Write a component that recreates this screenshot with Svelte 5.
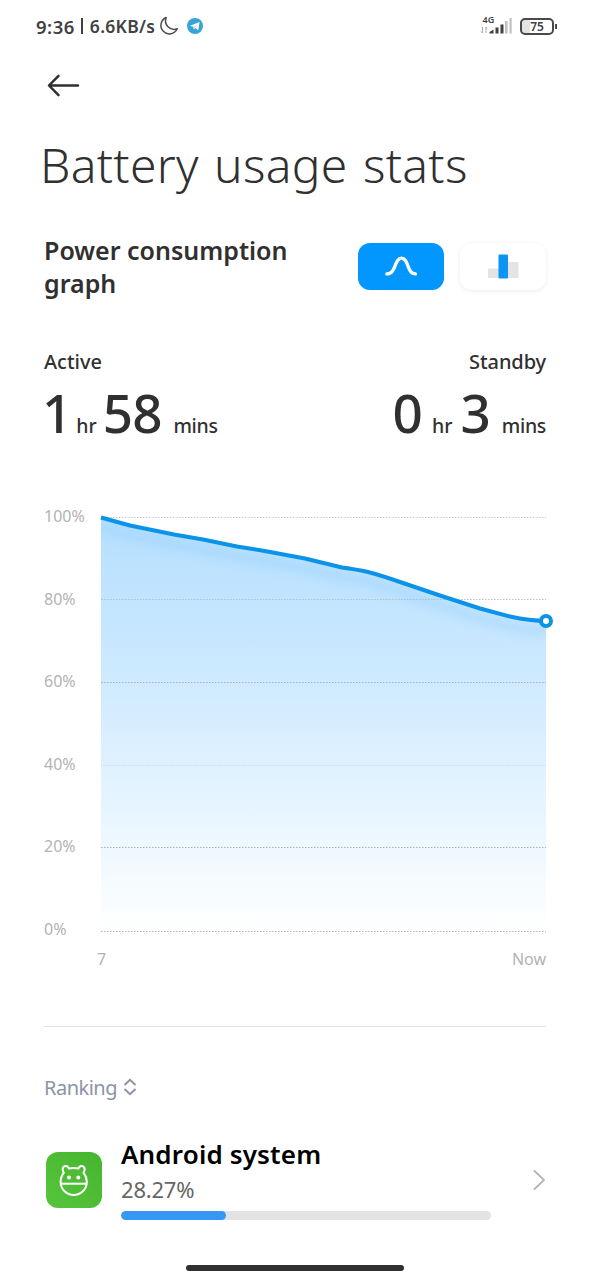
<script>
  let view = $state("line");

  const times = [
    { name: "Active", hours: 1, minutes: 58 },
    { name: "Standby", hours: 0, minutes: 3 },
  ];

  const levels = [
    { label: "100%", y: 17.5, opacity: 0.7 },
    { label: "80%", y: 99.5, opacity: 0.8 },
    { label: "60%", y: 182.5, opacity: 1 },
    { label: "40%", y: 265.5, opacity: 0.3 },
    { label: "20%", y: 347.5, opacity: 1 },
    { label: "0%", y: 431.5, opacity: 1 },
  ];

  const curve =
    "M101 17.5 L130 25.5 L174 34.5 L203 39.5 L237 46.5 L262 50.5 L305 58.5 L342 67.5 Q357 69.5 368 72 Q380 75 400 82 L440 95.5 L480 108.5 L510 116.5 Q530 120.8 546 121";

  const apps = [{ name: "Android system", percent: 28.27 }];
</script>

<main>
  <header class="status">
    <span class="clock">9:36<i></i><span class="speed">6.6KB/s</span></span>
    <svg class="moon" width="20" height="20" viewBox="0 0 20 20">
      <path d="M7.2 1.5 A8.5 8.5 0 1 0 18.2 12.8 A8.6 8.6 0 0 1 7.2 1.5Z" />
    </svg>
    <svg class="telegram" width="16" height="16" viewBox="0 0 16 16">
      <circle cx="8" cy="8" r="8" fill="#36a4da" />
      <path d="M3 7.8 L12.6 4 L11.2 12.2 L8.2 10 L6.8 11.4 L6.4 9 Z" fill="#fff" />
      <path d="M6.6 9.2 L10.7 5.8 L7.6 9.7" fill="#a9d6ee" />
    </svg>
    <svg class="signal" width="34" height="22" viewBox="0 0 34 22">
      <text x="2.5" y="9">4G</text>
      <path d="M2.5 13v6M1 17.5l1.5 1.5M6 19v-6M6 13L7.2 14.5" stroke="#aaa" fill="none" />
      <path d="M9.5 19.5V18L13.5 15.5V19.5ZM15.5 19.5V13.5h3V19.5ZM20.5 19.5v-9h3v9Z" fill="#414141" />
      <path d="M25 19.5V7h2.6V19.5ZM29.5 19.5V4h2.2V19.5Z" fill="#c2c2c2" />
    </svg>
    <span class="battery">75</span>
  </header>

  <button class="back" aria-label="Back">
    <svg width="34" height="24" viewBox="0 0 34 24">
      <path d="M12.5 2.8 L3 12.5 L12.5 22.2 M3 12.5H32" />
    </svg>
  </button>

  <h1>Battery usage stats</h1>

  <section class="mode">
    <h2>Power consumption graph</h2>
    <button class:selected={view === "line"} aria-label="Line graph" onclick={() => (view = "line")}>
      <svg width="34" height="22" viewBox="0 0 34 22">
        <path d="M2.8 18.9 C12.5 18.9 10 3.2 17.5 3.2 S22.5 18.9 31.5 18.9" fill="none" stroke="#fff" stroke-width="3.3" stroke-linecap="round" />
      </svg>
    </button>
    <button class="bars" aria-label="Bar graph" onclick={() => (view = "bars")}>
      <svg width="32" height="26" viewBox="0 0 32 26">
        <rect x="1" y="15.5" width="11" height="9.5" rx="1" fill="#e4e4e4" />
        <rect x="20" y="9" width="11.5" height="16" rx="1" fill="#e4e4e4" />
        <rect x="11.5" y="1.5" width="9.5" height="24" rx="1" fill="#0a95f4" />
      </svg>
    </button>
  </section>

  <section class="times">
    {#each times as time}
      <div class={time.name.toLowerCase()}>
        <p>{time.name}</p>
        <div class="duration">
          <b>{time.hours}</b><span class="hr">hr</span><b>{time.minutes}</b><span class="mins">mins</span>
        </div>
      </div>
    {/each}
  </section>

  <svg class="chart" width="590" height="480" viewBox="0 0 590 480">
    <defs>
      <linearGradient id="fill" x1="0" y1="17" x2="0" y2="431" gradientUnits="userSpaceOnUse">
        <stop offset="0" stop-color="#b4dfff" />
        <stop offset="0.4" stop-color="#cfeaff" />
        <stop offset="1" stop-color="#fff" />
      </linearGradient>
      <clipPath id="area"><path d="{curve} V431 H101 Z" /></clipPath>
      <filter id="soft" x="-10%" y="-20%" width="120%" height="150%"><feGaussianBlur stdDeviation="4" /></filter>
    </defs>
    <path d="{curve} V431 H101 Z" fill="url(#fill)" />
    <g clip-path="url(#area)">
      <path d={curve} transform="translate(0 10)" fill="none" stroke="#8bcaf8" stroke-width="10" opacity="0.3" filter="url(#soft)" />
    </g>
    {#each levels as level, i}
      <text x="44" y={22 + i * 82.6}>{level.label}</text>
      <path class="grid" d="M101 {level.y}H546" opacity={level.opacity} />
    {/each}
    <path d={curve} fill="none" stroke="#0b93ea" stroke-width="4" stroke-linejoin="round" />
    <circle cx="546" cy="121" r="5" fill="#fff" stroke="#0b93ea" stroke-width="4" />
    <text x="97" y="465">7</text>
    <text x="546" y="465" text-anchor="end">Now</text>
  </svg>

  <section class="ranking">
    <h3>
      Ranking
      <svg width="14" height="18" viewBox="0 0 14 18">
        <path d="M1.5 7 L7 1.8 L12.5 7 M1.5 11 L7 16.2 L12.5 11" />
      </svg>
    </h3>
    {#each apps as app}
      <div class="app">
        <svg class="icon" width="56" height="56" viewBox="0 0 56 56">
          <defs>
            <linearGradient id="green" x1="0" y1="1" x2="1" y2="0">
              <stop offset="0" stop-color="#57c43d" />
              <stop offset="1" stop-color="#46b52e" />
            </linearGradient>
          </defs>
          <rect width="56" height="56" rx="12" fill="url(#green)" />
          <g fill="none" stroke="#fff" stroke-width="2" stroke-linejoin="round">
            <path d="M17.8 20.8 C14.5 15.5 20 10.8 23 16.6 Q27.5 15.6 32.3 16.6 C35.3 10.8 40.8 15.5 37.5 20.8 C39.8 23.5 40.8 26.5 40.8 30 C40.8 37.5 34.5 43 27.7 43 C20.8 43 14.6 37.5 14.6 30 C14.6 26.5 15.5 23.5 17.8 20.8Z" />
            <path d="M14.8 31.7H40.8" />
          </g>
          <circle cx="23" cy="25.5" r="2" fill="#fff" />
          <circle cx="32.3" cy="25.5" r="2" fill="#fff" />
        </svg>
        <div class="details">
          <h4>{app.name}</h4>
          <p>{app.percent}%</p>
          <div class="track"><div class="used" style="width: {app.percent}%"></div></div>
        </div>
        <svg class="chevron" width="14" height="22" viewBox="0 0 14 22">
          <path d="M2 1.5 L12 11 L2 20.5" />
        </svg>
      </div>
    {/each}
  </section>

  <div class="home"></div>
</main>

<style>
  :global(body) {
    margin: 0;
    background: #fff;
    font-family: "Noto Sans", sans-serif;
    color: #303030;
  }

  main {
    width: 590px;
    height: 1280px;
    overflow: hidden;
    display: flex;
    flex-direction: column;
  }

  h1, h2, h3, h4, p {
    margin: 0;
  }

  button {
    padding: 0;
    border: none;
    background: none;
  }

  .status {
    height: 52px;
    flex-shrink: 0;
    box-sizing: border-box;
    padding: 0 33px 0 36px;
    display: flex;
    align-items: center;
    color: #414141;
  }

  .clock {
    display: flex;
    align-items: center;
    width: 122px;
    font-size: 18.5px;
    font-weight: 600;
    letter-spacing: 0.5px;
    white-space: nowrap;
  }

  .clock i {
    width: 2px;
    height: 16px;
    margin: 0 7px 0 6px;
    background: #414141;
  }

  .speed {
    font-size: 17.5px;
    letter-spacing: 0.3px;
  }

  .moon {
    margin-left: 1px;
    fill: none;
    stroke: #4c4c4c;
    stroke-width: 1.5;
    stroke-linejoin: round;
  }

  .telegram {
    margin-left: 8px;
  }

  .signal {
    margin-left: auto;
    margin-bottom: 3px;
  }

  .signal text {
    font-size: 9px;
    font-weight: 600;
    fill: #414141;
  }

  .battery {
    position: relative;
    width: 34px;
    height: 17px;
    margin: 0 3px 0 6px;
    box-sizing: border-box;
    border: 2px solid #4a4a4a;
    border-radius: 5px;
    font-size: 12px;
    font-weight: 600;
    line-height: 13px;
    text-align: center;
    background: linear-gradient(90deg, #e4e4e4 8px, #fff 8px);
  }

  .battery::after {
    content: "";
    position: absolute;
    right: -5px;
    top: 4px;
    width: 2px;
    height: 5px;
    background: #4a4a4a;
  }

  .back {
    width: 34px;
    height: 24px;
    margin: 21px 0 0 46px;
    flex-shrink: 0;
  }

  .back svg {
    display: block;
    fill: none;
    stroke: #303030;
    stroke-width: 2.5;
    stroke-linecap: round;
    stroke-linejoin: round;
  }

  h1 {
    height: 70px;
    margin: 33px 0 0 40px;
    font-size: 48px;
    font-weight: 300;
    line-height: 70px;
    letter-spacing: 0.3px;
    word-spacing: 2.5px;
    white-space: nowrap;
  }

  .mode {
    display: flex;
    align-items: center;
    height: 68px;
    margin: 32px 44px 0 44px;
  }

  h2 {
    width: 260px;
    margin: 1px auto 0 0;
    font-size: 25px;
    font-weight: 600;
    line-height: 33px;
  }

  .mode button {
    display: flex;
    align-items: center;
    justify-content: center;
    width: 86px;
    height: 47px;
    border-radius: 12px;
  }

  .mode .selected {
    background: #0297ff;
  }

  .mode .bars {
    margin-left: 16px;
    box-shadow: 0 1px 4px rgba(0, 0, 0, 0.08);
  }

  .times {
    display: flex;
    justify-content: space-between;
    height: 100px;
    margin: 48px 44px 0;
  }

  .times p {
    height: 28px;
    font-size: 20px;
    font-weight: 500;
    line-height: 28px;
  }

  .standby p {
    text-align: right;
    letter-spacing: -0.1px;
  }

  .duration {
    display: flex;
    align-items: baseline;
    height: 74px;
    line-height: 74px;
    font-size: 19.5px;
    font-weight: 500;
  }

  .duration b {
    font-size: 53px;
    font-weight: 500;
    letter-spacing: -1px;
  }

  .active .duration {
    margin-left: -2px;
  }

  .hr {
    margin: 0 6px 0 5px;
  }

  .standby .hr {
    margin: 0 8px 0 10px;
  }

  .mins {
    margin-left: 12px;
    letter-spacing: -0.3px;
  }

  .chart {
    margin-top: 52px;
    flex-shrink: 0;
    display: block;
  }

  .chart text {
    font-size: 16px;
    fill: #b3b3b3;
  }

  .grid {
    stroke: #aab4bc;
    stroke-width: 1;
    stroke-dasharray: 1.5 1.5;
  }

  .ranking {
    margin: 46px 44px 0;
    border-top: 1px solid #e4e4e4;
  }

  h3 {
    display: flex;
    align-items: center;
    gap: 6px;
    height: 30px;
    margin-top: 45px;
    color: #8c93a8;
    font-size: 20px;
    font-weight: 400;
    letter-spacing: -0.5px;
  }

  h3 svg {
    fill: none;
    stroke: #8c93a8;
    stroke-width: 2;
  }

  .app {
    display: flex;
    align-items: center;
    margin-top: 35px;
    padding-left: 2px;
  }

  .icon, .chevron {
    margin-top: 3px;
  }

  .details {
    width: 370px;
    margin-left: 19px;
  }

  h4 {
    color: #000;
    font-size: 26px;
    font-weight: 600;
    line-height: 34px;
    letter-spacing: 0.15px;
  }

  .details p {
    color: #666;
    font-size: 22px;
    line-height: 36px;
    letter-spacing: -0.2px;
  }

  .track {
    height: 9px;
    margin-top: 4px;
    overflow: hidden;
    border-radius: 5px;
    background: #e3e3e3;
  }

  .used {
    height: 9px;
    border-radius: 5px;
    background: #3797f4;
  }

  .chevron {
    margin-left: auto;
    fill: none;
    stroke: #b5b5b5;
    stroke-width: 1.8;
  }

  .home {
    width: 218px;
    height: 6px;
    margin: auto auto 9px;
    border-radius: 3px;
    background: #303030;
  }
</style>
